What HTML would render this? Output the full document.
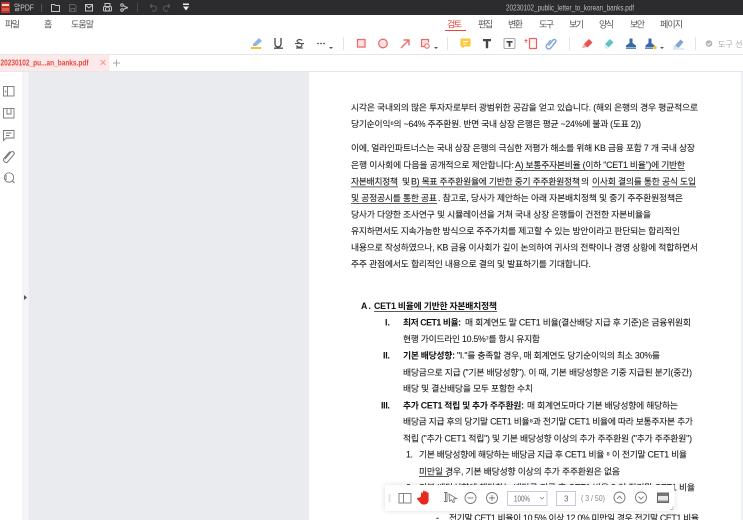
<!DOCTYPE html>
<html lang="ko"><head><meta charset="utf-8"><title>알PDF</title>
<style>
html,body{margin:0;padding:0;background:#fff;width:743px;height:520px;overflow:hidden}
svg{display:block;filter:blur(.3px)}
text{font-family:"Liberation Sans","Noto Sans CJK KR",sans-serif;white-space:pre}
.b{font-size:8.8px;fill:#1c1c1c;stroke:#1c1c1c;stroke-width:.08px}
.bb{font-size:8.8px;fill:#111;font-weight:bold}
.m{font-size:9px;fill:#555}
</style></head><body>
<svg width="743" height="520" viewBox="0 0 743 520" xmlns="http://www.w3.org/2000/svg">
<defs><filter id="s" x="-10%" y="-50%" width="120%" height="200%"><feGaussianBlur stdDeviation="3"/></filter></defs>
<!-- backgrounds -->
<rect width="743" height="520" fill="#fff"/>
<rect x="22" y="71" width="7" height="449" fill="#f4f4f6"/>
<rect x="29" y="71" width="280" height="449" fill="#e9ebef"/>
<rect x="0" y="54" width="743" height="1" fill="#e6e6e9"/>
<rect x="0" y="71" width="743" height="1" fill="#e6e7ea"/>
<path d="M24 295l3 2.500-3 2.500z" fill="#555"/>
<!-- title bar -->
<rect width="743" height="15" fill="#2c2c2f"/>
<rect x="1" y="2" width="9" height="11" rx="1" fill="#b8332c"/>
<rect x="2" y="4" width="7" height="2" fill="#e8d8c8"/>
<rect x="2" y="8" width="7" height="3" fill="#e05a48"/>
<text x="14" y="10.500" font-size="8.500" fill="#c9c9cb" textLength="20" lengthAdjust="spacingAndGlyphs">알PDF</text>
<rect x="41" y="4" width="1" height="8" fill="#555"/>
<g fill="none" stroke="#c4c4c6" stroke-width="1">
<path d="M51.500 4.500h3l1 1h4v6h-8z"/>
<path d="M69.500 4.500h5l1.500 1.500v5.500h-6.500z" stroke="#5e5e60"/><path d="M71 11v-2.500h3.500V11" stroke="#5e5e60"/>
<rect x="85.500" y="4.500" width="7" height="6.500"/><path d="M85.500 5l3.500 3 3.500-3"/>
<rect x="103.500" y="6.500" width="8" height="4.500" rx="1"/><rect x="105" y="3.500" width="5" height="3"/><circle cx="107.500" cy="9" r="2"/>
<circle cx="122" cy="5" r="1.300"/><circle cx="122" cy="10" r="1.300"/><path d="M123 5.500l5 2.500M123 9.500l5-2"/>
<path d="M150 6h4a2.500 2.500 0 0 1 0 5h-2M150 6l2-2M150 6l2 2" stroke="#5a5a5c"/>
<path d="M170 6h-4a2.500 2.500 0 0 0 0 5h2M170 6l-2-2M170 6l-2 2" stroke="#5a5a5c"/>
</g>
<rect x="137" y="3" width="1" height="9" fill="#4a4a4c"/>
<rect x="183" y="3.500" width="6" height="1.500" fill="#eee"/><path d="M183 6.500h6l-3 4z" fill="#eee"/>
<text x="506" y="10.300" font-size="8" fill="#bdbdbf" textLength="128" lengthAdjust="spacingAndGlyphs">20230102_public_letter_to_korean_banks.pdf</text>
<!-- menu -->
<text class="m" x="5" y="27.500" textLength="15">파일</text>
<text class="m" x="44" y="27.500" textLength="7">홈</text>
<text class="m" x="71" y="27.500" textLength="23">도움말</text>
<text class="m" x="447" y="27.500" textLength="15" style="fill:#e8453c">검토</text>
<rect x="445" y="30" width="21" height="1" fill="#e8453c"/>
<text class="m" x="478" y="27.500" textLength="15">편집</text>
<text class="m" x="508" y="27.500" textLength="15">변환</text>
<text class="m" x="539" y="27.500" textLength="15">도구</text>
<text class="m" x="569" y="27.500" textLength="15">보기</text>
<text class="m" x="599" y="27.500" textLength="15">양식</text>
<text class="m" x="630" y="27.500" textLength="15">보안</text>
<text class="m" x="660" y="27.500" textLength="23">페이지</text>
<!-- ribbon -->
<path d="M253 44l6-6 3 3-6 5h-3z" fill="#8db4e2"/><rect x="251" y="47" width="10" height="2" fill="#f4c22e"/>
<path d="M275 38v6a3 3 0 0 0 6 0v-6" fill="none" stroke="#444" stroke-width="1.300"/><rect x="274" y="47.500" width="9" height="1.300" fill="#444"/>
<path d="M302 40.500a2.800 2.200 0 0 0-5 .5c0 2 5 2 5 4a2.800 2.200 0 0 1-5.500.5" fill="none" stroke="#555" stroke-width="1.200"/><rect x="295" y="43" width="9" height="1.100" fill="#555"/><rect x="296" y="47.500" width="7" height="1.100" fill="#555"/>
<g fill="#555"><circle cx="318" cy="43.500" r=".9"/><circle cx="321" cy="43.500" r=".9"/><circle cx="324" cy="43.500" r=".9"/><path d="M329 47h4l-2 2z"/></g>
<rect x="343" y="37" width="1" height="13" fill="#e4e4e6"/>
<rect x="357.500" y="39.500" width="7.500" height="7.500" fill="#fde3e3" stroke="#ee6b6b" stroke-width="1.300"/>
<circle cx="383" cy="43.500" r="4.300" fill="#fde3e3" stroke="#ee6b6b" stroke-width="1.300"/>
<path d="M401 48l7.500-7.500M403.500 40h5.500v5.500" fill="none" stroke="#ee6b6b" stroke-width="1.400"/>
<path d="M428 46.500h-6.500v-7h7v3" fill="#fde3e3" stroke="#ee6b6b" stroke-width="1.200"/><circle cx="427" cy="46" r="2.200" fill="#fff" stroke="#ee6b6b" stroke-width="1.100"/>
<path d="M434 47h4l-2 2z" fill="#555"/>
<rect x="447" y="37" width="1" height="13" fill="#e4e4e6"/>
<path d="M460.500 38.500h10v8h-6l-2.500 2v-2h-1.500z" fill="#fcc63d"/><rect x="463" y="41" width="5" height="1" fill="#fff"/><rect x="463" y="43.500" width="3.500" height="1" fill="#fff"/>
<path d="M483 39h8v2.200h-2.800v7h-2.400v-7H483z" fill="#444"/>
<rect x="504" y="38.500" width="11" height="10" rx="1" fill="#fafafa" stroke="#aaa"/><path d="M506.500 41h6v1.600h-2.100v4h-1.800v-4h-2.100z" fill="#444"/>
<rect x="529.500" y="38.500" width="7" height="10" rx=".5" fill="#fff5f5" stroke="#ee5f5f" stroke-width="1.200"/><path d="M526 39v4M524.500 40.500h3" stroke="#ee5f5f" fill="none"/>
<path d="M549 46l4.500-5.500a1.700 1.700 0 0 1 2.700 2l-5 6a2.500 2.500 0 0 1-4-3l4-5" fill="none" stroke="#7fa4d6" stroke-width="1.400" transform="translate(-.5 -.5)"/>
<rect x="569" y="37" width="1" height="13" fill="#e4e4e6"/>
<path d="M584 44l5-5 3.500 3.500-5 5z" fill="#ee5050"/><path d="M582 48l2-4 3 3z" fill="#f4a0a0"/>
<path d="M605 44l5-5 3.500 3.500-5 5z" fill="#5cc4c4"/><path d="M604 45l4.500 3.500h-3z" fill="#bfe7e7"/>
<path d="M629.500 38.500h3v4.500l3.500 2.500v1.500h-10v-1.500l3.500-2.500z" fill="#3a6aa5"/><rect x="626" y="47.500" width="10" height="1.300" fill="#3a6aa5"/>
<path d="M648.500 38.500h3v4.500l3 2.500v1.500h-9v-1.500l3-2.500z" fill="#3a6aa5"/><rect x="645" y="47.500" width="8" height="1.300" fill="#3a6aa5"/><circle cx="655" cy="47.500" r="1.700" fill="#f4c22e"/><path d="M660 47h4l-2 2z" fill="#555"/>
<path d="M675 45.500l5.500-6 3 2.500-5 6z" fill="#7fa7d8"/><path d="M673 48.500h11v1h-11z" fill="#c5d6ea"/><path d="M674 45l-.5 3.500 4-.5z" fill="#cfe0f3"/>
<rect x="695" y="37" width="1" height="13" fill="#e4e4e6"/>
<circle cx="709" cy="43.500" r="3.300" fill="#b5b5b8"/><path d="M707.300 43.500l1.300 1.300 2.200-2.300" fill="none" stroke="#fff" stroke-width=".9"/>
<text x="718" y="47" font-size="8" fill="#a5a5a8" textLength="32">도구 선택</text>
<!-- tab -->
<rect x="0" y="55" width="109.500" height="16" fill="#fde9e9"/>
<text x="0.500" y="65.500" font-size="8" fill="#e8453c" font-weight="bold" textLength="88" lengthAdjust="spacingAndGlyphs">20230102_pu...an_banks.pdf</text>
<path d="M100.500 60l5 5M105.500 60l-5 5" stroke="#f09a9a" fill="none"/>
<path d="M113 63h7M116.500 59.500v7" stroke="#aaa" fill="none"/>
<!-- sidebar icons -->
<g fill="none" stroke="#777" stroke-width=".9">
<rect x="3.500" y="86.500" width="10.500" height="9.500"/><path d="M7.500 86.500v9.500"/><path d="M5 90.500l1 1-1 1" stroke-width=".8"/>
<rect x="3.500" y="108.500" width="10.500" height="9.500"/><path d="M7 108.500v5.500h4v-5.500"/>
<path d="M3.500 130.500h10.500v7.500h-8l-2.500 2.500z"/><path d="M6 133h5.500M6 135.500h3.500"/>
<path d="M5 159l6-7a2 2 0 0 1 3 2.500l-7 8a3 3 0 0 1-3.500-3.500l6.500-7.500" stroke-width="1"/>
<circle cx="9" cy="177.500" r="4.700"/><path d="M12.500 181l2 2M6 175v5" stroke-width="1"/>
</g>
<!-- page -->
<rect x="309" y="72" width="432" height="448" fill="#fff"/>
<rect x="741" y="72" width="2" height="448" fill="#eff0f3"/>
<g>
<text class="b" x="351" y="110.500" textLength="347">시각은 국내외의 많은 투자자로부터 광범위한 공감을 얻고 있습니다. (해외 은행의 경우 평균적으로</text>
<text class="b" x="351" y="127" textLength="290">당기순이익⁶의 ~64% 주주환원. 반면 국내 상장 은행은 평균 ~24%에 불과 (도표 2))</text>
<text class="b" x="351" y="151" textLength="344">이에, 얼라인파트너스는 국내 상장 은행의 극심한 저평가 해소를 위해 KB 금융 포함 7 개 국내 상장</text>
<text class="b" x="351" y="168" textLength="163">은행 이사회에 다음을 공개적으로 제안합니다:</text>
<text class="b" x="515" y="168" textLength="170">A) 보통주자본비율 (이하 "CET1 비율")에 기반한</text>
<text class="b" x="351" y="184.500" textLength="47">자본배치정책</text>
<text class="b" x="402" y="184.500" textLength="7">및</text>
<text class="b" x="411" y="184.500" textLength="169">B) 목표 주주환원율에 기반한 중기 주주환원정책</text>
<text class="b" x="581" y="184.500" textLength="9">의</text>
<text class="b" x="592" y="184.500" textLength="104">이사회 결의를 통한 공식 도입</text>
<text class="b" x="351" y="201" textLength="86">및 공정공시를 통한 공표</text>
<text class="b" x="438" y="201" textLength="245">. 참고로, 당사가 제안하는 아래 자본배치정책 및 중기 주주환원정책은</text>
<text class="b" x="351" y="217.500" textLength="300">당사가 다양한 조사연구 및 시뮬레이션을 거쳐 국내 상장 은행들이 건전한 자본비율을</text>
<text class="b" x="351" y="234" textLength="329">유지하면서도 지속가능한 방식으로 주주가치를 제고할 수 있는 방안이라고 판단되는 합리적인</text>
<text class="b" x="351" y="250.500" textLength="347">내용으로 작성하였으나, KB 금융 이사회가 깊이 논의하여 귀사의 전략이나 경영 상황에 적합하면서</text>
<text class="b" x="351" y="267" textLength="240">주주 관점에서도 합리적인 내용으로 결의 및 발표하기를 기대합니다.</text>
<g fill="#333"><rect x="515" y="170" width="170" height=".8"/><rect x="351" y="186.500" width="47" height=".8"/><rect x="411" y="186.500" width="169" height=".8"/><rect x="592" y="186.500" width="104" height=".8"/><rect x="351" y="203" width="86" height=".8"/><rect x="374" y="311" width="123" height=".8"/><rect x="419" y="476" width="30" height=".8"/></g>
<text class="bb" x="361" y="309" textLength="10">A.</text>
<text class="bb" x="374" y="309" textLength="123">CET1 비율에 기반한 자본배치정책</text>
<text class="bb" x="385" y="325.500" textLength="5">I.</text>
<text class="bb" x="403" y="325.500" textLength="58">최저 CET1 비율:</text>
<text class="b" x="465" y="325.500" textLength="226">매 회계연도 말 CET1 비율(결산배당 지급 후 기준)은 금융위원회</text>
<text class="b" x="403" y="342" textLength="137">현행 가이드라인 10.5%⁷를 항시 유지함</text>
<text class="bb" x="383" y="358.500" textLength="7">II.</text>
<text class="bb" x="403" y="358.500" textLength="52">기본 배당성향:</text>
<text class="b" x="457" y="358.500" textLength="203">"I."를 충족할 경우, 매 회계연도 당기순이익의 최소 30%를</text>
<text class="b" x="403" y="375.500" textLength="289">배당금으로 지급 ("기본 배당성향"). 이 때, 기본 배당성향은 기중 지급된 분기(중간)</text>
<text class="b" x="403" y="391.500" textLength="130">배당 및 결산배당을 모두 포함한 수치</text>
<text class="bb" x="381" y="408.500" textLength="9">III.</text>
<text class="bb" x="403" y="408.500" textLength="121">추가 CET1 적립 및 추가 주주환원:</text>
<text class="b" x="527" y="408.500" textLength="151">매 회계연도마다 기본 배당성향에 해당하는</text>
<text class="b" x="403" y="424.500" textLength="290">배당금 지급 후의 당기말 CET1 비율⁸과 전기말 CET1 비율에 따라 보통주자본 추가</text>
<text class="b" x="403" y="441.500" textLength="289">적립 ("추가 CET1 적립") 및 기본 배당성향 이상의 추가 주주환원 ("추가 주주환원")</text>
<text class="b" x="406" y="457.500" textLength="7">1.</text>
<text class="b" x="419" y="457.500" textLength="268">기본 배당성향에 해당하는 배당금 지급 후 CET1 비율 ⁸ 이 전기말 CET1 비율</text>
<text class="b" x="419" y="474.500" textLength="201">미만일 경우, 기본 배당성향 이상의 추가 주주환원은 없음</text>
<text class="b" x="406" y="490.500" textLength="7">2.</text>
<text class="b" x="419" y="490.500" textLength="276">기본 배당성향에 해당하는 배당금 지급 후 CET1 비율 8 이 전기말 CET1 비율</text>
<text class="b" x="436" y="521" textLength="5">-</text>
<text class="b" x="449" y="521" textLength="250">전기말 CET1 비율이 10.5% 이상 12.0% 미만일 경우 전기말 CET1 비율</text>
</g>
<!-- floating toolbar -->
<rect x="385" y="485" width="289.500" height="26" fill="#000" opacity=".13" filter="url(#s)"/>
<rect x="385" y="485" width="289.500" height="26" fill="#fff"/>
<rect x="388.500" y="494" width="2" height="8" fill="#e4e4e6"/>
<g fill="none" stroke="#777" stroke-width=".9">
<rect x="399" y="493.500" width="12" height="9.500"/><path d="M403.500 493.500v9.500"/>
<path d="M444 492.500h3v9h-3M445.500 492.500v9"/>
<path d="M449 494l7.500 4.500-3 .5 1 3-1.500.5-1.500-2.800-2 1.500z"/>
<circle cx="470.500" cy="498" r="5.500"/><path d="M467.500 498h6"/>
<circle cx="492" cy="498" r="5.500"/><path d="M489 498h6M492 495v6"/>
<circle cx="619.500" cy="497.500" r="5.500"/><path d="M617 499l2.500-2.800 2.500 2.800"/>
<circle cx="641" cy="497.500" r="5.500"/><path d="M638.500 496.500l2.500 2.800 2.500-2.800"/>
</g>
<path d="M421 496.500v-3.500a1 1 0 0 1 1.800 0l.2 2v-3.500a1 1 0 0 1 1.900 0v3.500-3a1 1 0 0 1 1.900 0v3.500-2.500a1 1 0 0 1 1.800 0v7c0 2.500-1.500 4.500-4 4.500h-1.500c-1.500 0-2.500-1-3-2l-3-3.500c-.5-1 .8-1.800 1.700-1z" fill="#e8271e"/>
<rect x="507.500" y="491.500" width="39.500" height="14" fill="#fff" stroke="#c5cbdc"/>
<text x="514" y="501.500" font-size="8" fill="#666" textLength="16" lengthAdjust="spacingAndGlyphs">100%</text>
<path d="M540 497l2 2 2-2" fill="none" stroke="#888" stroke-width=".8"/>
<rect x="556.500" y="491.500" width="19" height="14" fill="#fff" stroke="#c5cbdc"/>
<text x="564" y="501.500" font-size="8" fill="#666">3</text>
<text x="581" y="501" font-size="8" fill="#888" textLength="24" lengthAdjust="spacingAndGlyphs">( 3 / 50)</text>
<rect x="657.500" y="493" width="11" height="9.500" fill="#e8e8e8" stroke="#666"/><rect x="658" y="493.500" width="10" height="2.500" fill="#777"/><rect x="658" y="500.500" width="10" height="1.500" fill="#888"/>
<path d="M673 506.500v3h-3" fill="none" stroke="#aaa" stroke-width=".7"/>
</svg>
</body></html>
